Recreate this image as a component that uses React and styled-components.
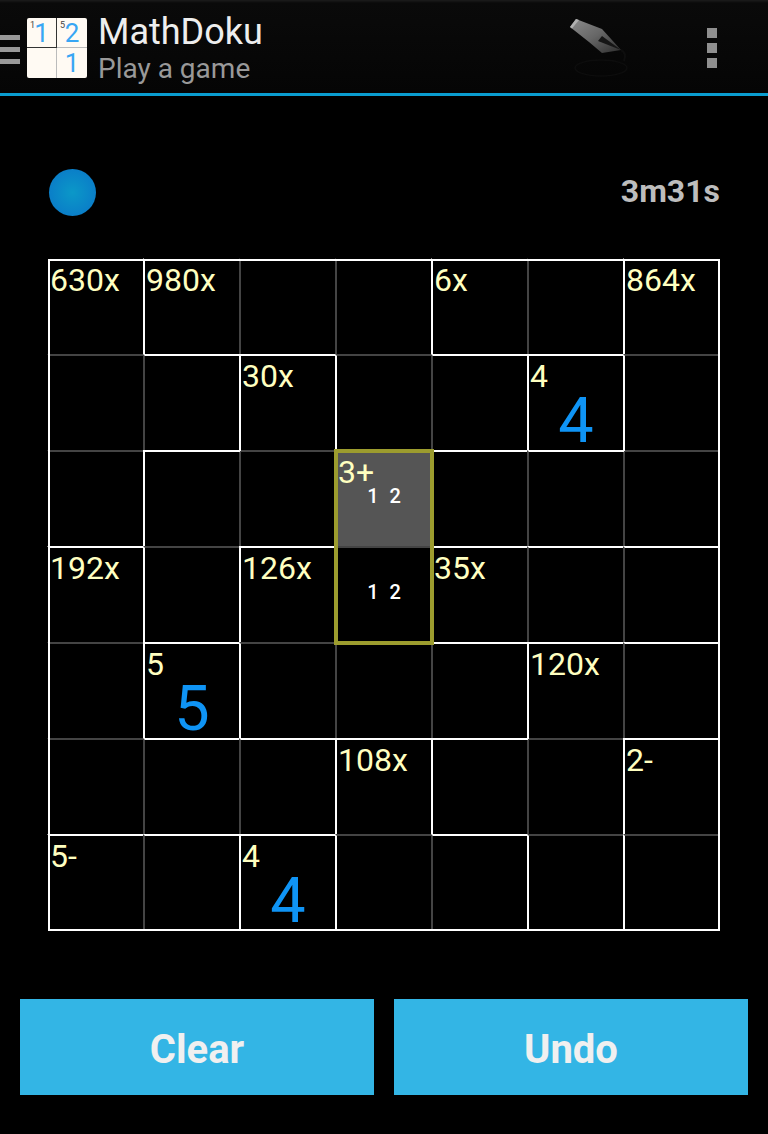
import React from "react";
import styled, { createGlobalStyle } from "styled-components";

const GlobalStyle = createGlobalStyle`
  html, body {
    margin: 0;
    padding: 0;
    background: #000;
  }
  body {
    font-family: Roboto, "Liberation Sans", sans-serif;
  }
`;

const Page = styled.div`
  width: 768px;
  height: 1134px;
  overflow: hidden;
  display: flex;
  flex-direction: column;
  background: #000;
`;

const Header = styled.header`
  box-sizing: border-box;
  height: 96px;
  flex: none;
  display: flex;
  align-items: center;
  background: linear-gradient(#1c1c1c 0, #0a0a0a 3px, #050505 100%);
  border-bottom: 3px solid #0a9dd0;
`;

const MenuBars = styled.div`
  width: 20px;
  display: flex;
  flex-direction: column;
  gap: 7px;
  margin-top: 6px;
`;

const MenuBar = styled.span`
  display: block;
  height: 5px;
  background: #999;
`;

const Logo = styled.div`
  box-sizing: border-box;
  width: 60px;
  height: 60px;
  margin-left: 7px;
  margin-top: 3px;
  flex: none;
  display: grid;
  grid-template-columns: 30px 30px;
  grid-template-rows: 30px 30px;
  border-radius: 2px;
  background: #fffaf3;
  overflow: hidden;
`;

const LogoCell = styled.div`
  box-sizing: border-box;
  min-height: 0;
  display: grid;
  color: #38a6f4;
  font-size: 26px;
  line-height: 26px;
  border-right: ${(p) => (p.$right ? `1px solid ${p.$right}` : "none")};
  border-bottom: ${(p) => (p.$bottom ? `1px solid ${p.$bottom}` : "none")};
`;

const LogoDigit = styled.span`
  grid-area: 1 / 1;
  justify-self: center;
  align-self: center;
`;

const LogoSmall = styled.span`
  grid-area: 1 / 1;
  justify-self: start;
  align-self: start;
  margin: 3px 0 0 3px;
  font-size: 9px;
  line-height: 9px;
  color: #444;
`;

const TitleBlock = styled.div`
  margin-left: 11px;
  margin-top: 4px;
  display: flex;
  flex-direction: column;
`;

const Title = styled.div`
  font-size: 36px;
  line-height: 39px;
  color: #eee;
`;

const Subtitle = styled.div`
  font-size: 28px;
  line-height: 33px;
  color: #999;
`;

const PenIcon = styled.svg`
  margin-left: auto;
  margin-top: 5px;
  width: 64px;
  height: 64px;
  flex: none;
`;

const Dots = styled.div`
  margin: 3px 51px 0 74px;
  display: flex;
  flex-direction: column;
  gap: 5px;
`;

const Dot = styled.span`
  display: block;
  width: 10px;
  height: 10px;
  background: #8f8f8f;
`;

const Content = styled.main`
  padding: 0 48px;
`;

const StatusRow = styled.div`
  display: flex;
  align-items: center;
  justify-content: space-between;
  margin-top: 73px;
  margin-bottom: 43px;
`;

const Ball = styled.div`
  width: 47px;
  height: 47px;
  margin-left: 1px;
  border-radius: 50%;
  background: radial-gradient(circle, #0b98c8 0, #0a74c8 100%);
`;

const Timer = styled.div`
  margin-bottom: 3px;
  font-size: 32px;
  font-weight: 700;
  color: #bdbdbd;
`;

const Board = styled.div`
  position: relative;
  width: 672px;
  height: 672px;
  display: grid;
  grid-template-columns: repeat(7, 96px);
  grid-template-rows: repeat(7, 96px);

  &::after {
    content: "";
    position: absolute;
    inset: 0;
    z-index: 3;
    border: 2px solid #fff;
    pointer-events: none;
  }
`;

const edge = (kind) =>
  kind === "white" ? "#fff" : kind === "dim" ? "#444" : "transparent";

const Cell = styled.div`
  position: relative;
  display: grid;
  background: ${(p) => (p.$active ? "#555" : "#000")};

  &::after {
    content: "";
    position: absolute;
    inset: -1px 0 0 -1px;
    z-index: ${(p) => (p.$strong ? 2 : 1)};
    border-top: 2px solid ${(p) => edge(p.$top)};
    border-left: 2px solid ${(p) => edge(p.$left)};
  }
`;

const SelectedFrame = styled.span`
  position: absolute;
  inset: -2px;
  z-index: 4;
  border-style: solid;
  border-color: #9c9c2e;
  border-width: ${(p) => (p.$top ? 4 : 0)}px ${(p) => (p.$right ? 4 : 0)}px
    ${(p) => (p.$bottom ? 4 : 0)}px ${(p) => (p.$left ? 4 : 0)}px;
`;

const Clue = styled.span`
  grid-area: 1 / 1;
  justify-self: start;
  align-self: start;
  margin: 3px 0 0 2px;
  font-size: 32px;
  line-height: 36px;
  color: #ffffc0;
`;

const Value = styled.span`
  grid-area: 1 / 1;
  justify-self: center;
  align-self: end;
  font-size: 63px;
  line-height: 60px;
  color: #0f94f5;
`;

const Notes = styled.span`
  grid-area: 1 / 1;
  justify-self: center;
  align-self: start;
  margin-top: 33px;
  font-size: 20px;
  font-weight: 500;
  line-height: 24px;
  word-spacing: 6px;
  color: #fff;
  white-space: pre;
`;

const Actions = styled.div`
  display: flex;
  gap: 20px;
  padding: 0 20px;
  margin-top: 68px;
`;

const ActionButton = styled.button`
  flex: 1;
  height: 96px;
  border: none;
  padding: 4px 0 0;
  background: #33b5e5;
  color: #f0f0f0;
  font-family: inherit;
  font-size: 40px;
  font-weight: 700;
`;

const cages = [
  "ABBBCCD",
  "AAFBBGD",
  "AFFIDDD",
  "KFLIMMM",
  "KNLLLOO",
  "KKKPOOR",
  "SSTPPOR",
];

const SELECTED_CAGE = "I";

const clues = {
  "0,0": "630x",
  "0,1": "980x",
  "0,4": "6x",
  "0,6": "864x",
  "1,2": "30x",
  "1,5": "4",
  "2,3": "3+",
  "3,0": "192x",
  "3,2": "126x",
  "3,4": "35x",
  "4,1": "5",
  "4,5": "120x",
  "5,3": "108x",
  "5,6": "2-",
  "6,0": "5-",
  "6,2": "4",
};

const values = { "1,5": "4", "4,1": "5", "6,2": "4" };
const notes = { "2,3": "1 2", "3,3": "1 2" };
const activeCell = "2,3";

const cageAt = (r, c) => (cages[r] ? cages[r][c] : undefined);

function BoardCell({ r, c }) {
  const key = `${r},${c}`;
  const cage = cageAt(r, c);
  const kindOf = (other) =>
    other === undefined ? "none" : other === cage ? "dim" : "white";
  const top = kindOf(cageAt(r - 1, c));
  const left = kindOf(cageAt(r, c - 1));
  const selected = cage === SELECTED_CAGE;

  return (
    <Cell
      $top={top}
      $left={left}
      $strong={top === "white" || left === "white"}
      $active={key === activeCell}
    >
      {selected && (
        <SelectedFrame
          $top={cageAt(r - 1, c) !== cage}
          $bottom={cageAt(r + 1, c) !== cage}
          $left={cageAt(r, c - 1) !== cage}
          $right={cageAt(r, c + 1) !== cage}
        />
      )}
      {clues[key] && <Clue>{clues[key]}</Clue>}
      {values[key] && <Value>{values[key]}</Value>}
      {notes[key] && <Notes>{notes[key]}</Notes>}
    </Cell>
  );
}

function Pen() {
  return (
    <PenIcon viewBox="0 0 64 64">
      <defs>
        <linearGradient id="nib" x1="0" y1="0" x2="1" y2="1">
          <stop offset="0" stopColor="#8c8c8c" />
          <stop offset="0.5" stopColor="#666" />
          <stop offset="1" stopColor="#2e2e2e" />
        </linearGradient>
      </defs>
      <ellipse
        cx="32"
        cy="51"
        rx="26"
        ry="8"
        fill="none"
        stroke="#0d0d0d"
        strokeWidth="1.5"
      />
      <path d="M7 2 L33 12 L52 33 L33 36 L20 25 L1 10 Z" fill="url(#nib)" />
      <path d="M7 2 L1 10 L3 11.5 L10 3 Z" fill="#b0b0b0" />
      <path d="M29 24 L33 19 L52 33 Z" fill="#161616" />
      <path d="M52 33 Q58 36 55 44" fill="none" stroke="#0e0e0e" strokeWidth="2" />
    </PenIcon>
  );
}

export default function App() {
  return (
    <Page>
      <GlobalStyle />
      <Header>
        <MenuBars>
          <MenuBar />
          <MenuBar />
          <MenuBar />
        </MenuBars>
        <Logo>
          <LogoCell $right="#333" $bottom="#333">
            <LogoDigit>1</LogoDigit>
            <LogoSmall>1</LogoSmall>
          </LogoCell>
          <LogoCell $bottom="#bbb">
            <LogoDigit>2</LogoDigit>
            <LogoSmall>5</LogoSmall>
          </LogoCell>
          <LogoCell $right="#bbb" />
          <LogoCell>
            <LogoDigit>1</LogoDigit>
          </LogoCell>
        </Logo>
        <TitleBlock>
          <Title>MathDoku</Title>
          <Subtitle>Play a game</Subtitle>
        </TitleBlock>
        <Pen />
        <Dots>
          <Dot />
          <Dot />
          <Dot />
        </Dots>
      </Header>
      <Content>
        <StatusRow>
          <Ball />
          <Timer>3m31s</Timer>
        </StatusRow>
        <Board>
          {cages.map((row, r) =>
            row
              .split("")
              .map((_, c) => <BoardCell key={`${r}-${c}`} r={r} c={c} />)
          )}
        </Board>
      </Content>
      <Actions>
        <ActionButton>Clear</ActionButton>
        <ActionButton>Undo</ActionButton>
      </Actions>
    </Page>
  );
}
